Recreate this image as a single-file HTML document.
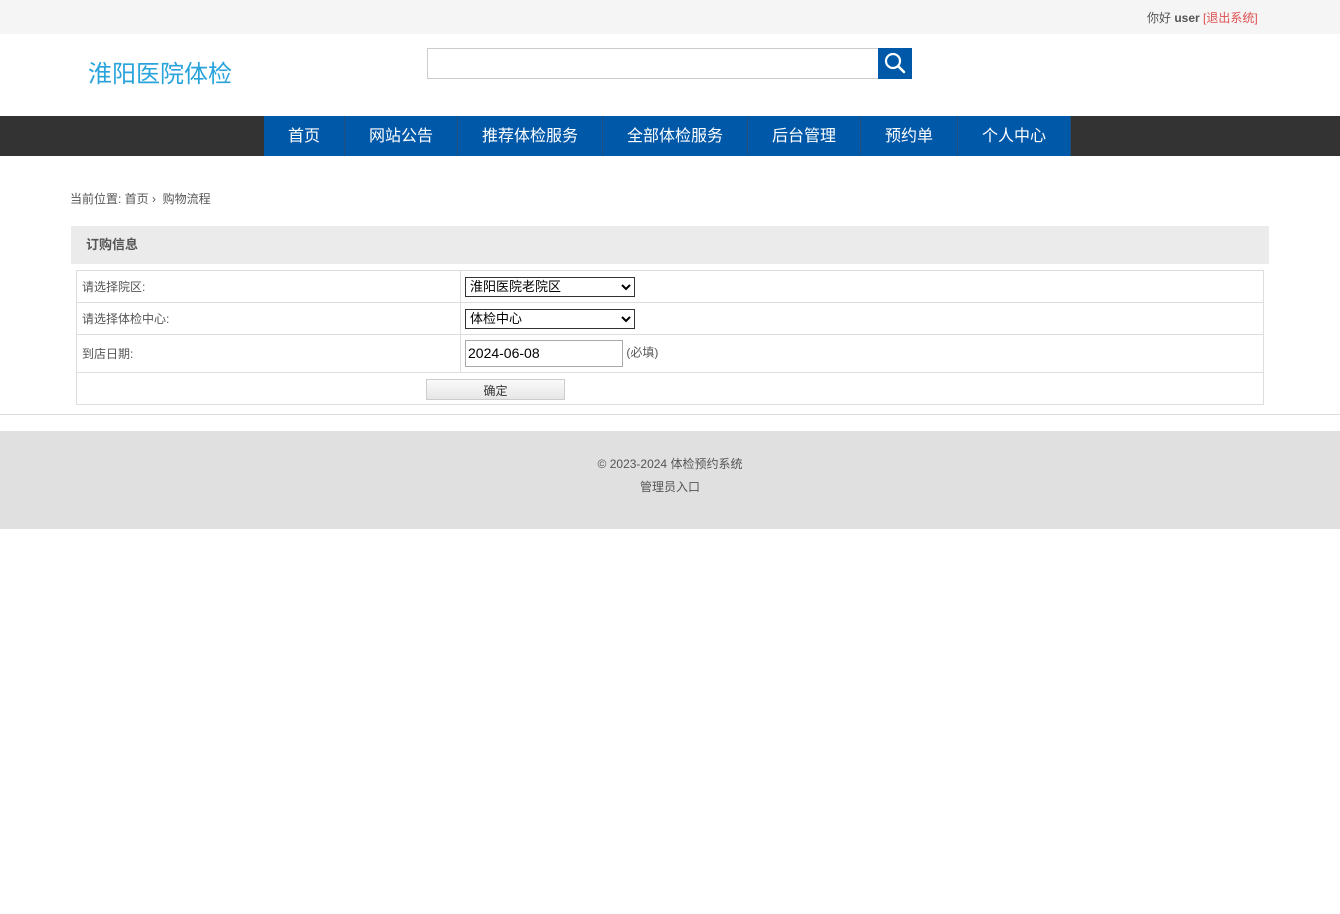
<!DOCTYPE html>
<html><head><meta charset="utf-8"><style>
*{margin:0;padding:0;box-sizing:border-box}
body{width:1340px;height:914px;background:#fff;font-family:"Liberation Sans","Noto Sans CJK SC",sans-serif;position:relative;color:#555;font-size:12px}
.a{position:absolute}
.nav a{position:absolute;top:0;height:40px;line-height:42px;text-align:center;color:#fff;font-size:16px;background:#0058a8;text-decoration:none}
td{border:1px solid #ddd;font-size:12px;color:#555;padding-left:5px}
select{font-family:inherit;font-size:13px;color:#000;border:1px solid #333;height:20px;width:170px;background:#fff;margin-left:-1px}
</style></head><body>
<div class="a" style="left:0;top:0;width:1340px;height:34px;background:#f5f5f5"></div>
<div class="a" style="left:1147px;top:9px;font-size:12px;color:#555">你好 <b>user</b> <span style="color:#e05050">[退出系统]</span></div>
<div class="a" style="left:88px;top:54px;font-size:24px;color:#29a3db">淮阳医院体检</div>
<div class="a" style="left:427px;top:48px;width:452px;height:31px;border:1px solid #ccc"></div>
<div class="a" style="left:878px;top:48px;width:34px;height:31px;background:#0058a8">
<svg width="34" height="31" viewBox="0 0 34 31"><circle cx="15" cy="13" r="7" fill="none" stroke="#fff" stroke-width="2.2"/><line x1="20" y1="18" x2="26" y2="24" stroke="#fff" stroke-width="2.6" stroke-linecap="round"/></svg></div>
<div class="a nav" style="left:0;top:116px;width:1340px;height:40px;background:#333">
<div class="a" style="left:264px;top:0;width:807px;height:40px;background:#1f4f7e"></div>
<a style="left:264px;width:80px">首页</a>
<a style="left:345px;width:112px">网站公告</a>
<a style="left:458px;width:144px">推荐体检服务</a>
<a style="left:603px;width:144px">全部体检服务</a>
<a style="left:748px;width:112px">后台管理</a>
<a style="left:861px;width:96px">预约单</a>
<a style="left:958px;width:112px">个人中心</a>
</div>
<div class="a" style="left:70px;top:190px;font-size:12px;color:#555">当前位置: 首页 › &nbsp;购物流程</div>
<div class="a" style="left:71px;top:226px;width:1198px;height:38px;background:#ebebeb;font-size:13px;font-weight:bold;color:#555;line-height:38px;padding-left:15px">订购信息</div>
<table class="a" style="left:76px;top:270px;width:1188px;border-collapse:collapse">
<tr style="height:32px"><td style="width:384px">请选择院区:</td><td><select><option>淮阳医院老院区</option></select></td></tr>
<tr style="height:32px"><td>请选择体检中心:</td><td><select><option>体检中心</option></select></td></tr>
<tr style="height:38px"><td>到店日期:</td><td><span style="display:inline-block;margin-left:-1px;width:158px;height:27px;border:1px solid #aaa;font-size:14px;color:#000;line-height:25px;padding-left:2px;vertical-align:middle">2024-06-08</span> (必填)</td></tr>
<tr style="height:32px"><td colspan="2" style="padding:0"><div style="margin-left:349px;margin-top:2px;width:139px;height:21px;border:1px solid #ccc;background:linear-gradient(#fafafa,#e6e6e6);text-align:center;line-height:23px;color:#333;font-size:12px">确定</div></td></tr>
</table>
<div class="a" style="left:0;top:414px;width:1340px;height:1px;background:#ddd"></div>
<div class="a" style="left:0;top:431px;width:1340px;height:98px;background:#e0e0e0;text-align:center;font-size:12px;color:#555">
<div style="margin-top:24px">© 2023-2024 体检预约系统</div><div style="margin-top:6px">管理员入口</div></div>
</body></html>
